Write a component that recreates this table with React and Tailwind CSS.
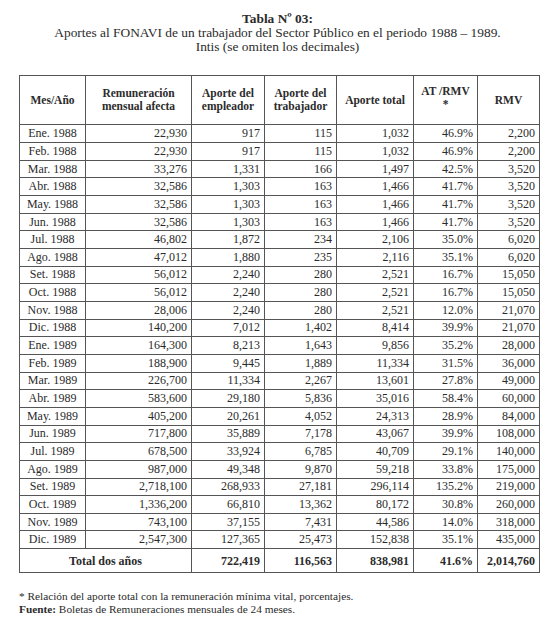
const rows = [
  ["Ene. 1988", "22,930", "917", "115", "1,032", "46.9%", "2,200"],
  ["Feb. 1988", "22,930", "917", "115", "1,032", "46.9%", "2,200"],
  ["Mar. 1988", "33,276", "1,331", "166", "1,497", "42.5%", "3,520"],
  ["Abr. 1988", "32,586", "1,303", "163", "1,466", "41.7%", "3,520"],
  ["May. 1988", "32,586", "1,303", "163", "1,466", "41.7%", "3,520"],
  ["Jun. 1988", "32,586", "1,303", "163", "1,466", "41.7%", "3,520"],
  ["Jul. 1988", "46,802", "1,872", "234", "2,106", "35.0%", "6,020"],
  ["Ago. 1988", "47,012", "1,880", "235", "2,116", "35.1%", "6,020"],
  ["Set. 1988", "56,012", "2,240", "280", "2,521", "16.7%", "15,050"],
  ["Oct. 1988", "56,012", "2,240", "280", "2,521", "16.7%", "15,050"],
  ["Nov. 1988", "28,006", "2,240", "280", "2,521", "12.0%", "21,070"],
  ["Dic. 1988", "140,200", "7,012", "1,402", "8,414", "39.9%", "21,070"],
  ["Ene. 1989", "164,300", "8,213", "1,643", "9,856", "35.2%", "28,000"],
  ["Feb. 1989", "188,900", "9,445", "1,889", "11,334", "31.5%", "36,000"],
  ["Mar. 1989", "226,700", "11,334", "2,267", "13,601", "27.8%", "49,000"],
  ["Abr. 1989", "583,600", "29,180", "5,836", "35,016", "58.4%", "60,000"],
  ["May. 1989", "405,200", "20,261", "4,052", "24,313", "28.9%", "84,000"],
  ["Jun. 1989", "717,800", "35,889", "7,178", "43,067", "39.9%", "108,000"],
  ["Jul. 1989", "678,500", "33,924", "6,785", "40,709", "29.1%", "140,000"],
  ["Ago. 1989", "987,000", "49,348", "9,870", "59,218", "33.8%", "175,000"],
  ["Set. 1989", "2,718,100", "268,933", "27,181", "296,114", "135.2%", "219,000"],
  ["Oct. 1989", "1,336,200", "66,810", "13,362", "80,172", "30.8%", "260,000"],
  ["Nov. 1989", "743,100", "37,155", "7,431", "44,586", "14.0%", "318,000"],
  ["Dic. 1989", "2,547,300", "127,365", "25,473", "152,838", "35.1%", "435,000"],
];

const cell = "border border-[#555] px-[4px] py-0";

export default function App() {
  return (
    <div className="w-[555px] h-[619px] bg-white text-[#2b2b2b] overflow-hidden font-['Liberation_Serif',serif]">
      <div className="pt-[12px] text-center text-[13.4px] leading-[13.8px]">
        <div className="font-bold">Tabla Nº 03:</div>
        <div>Aportes al FONAVI de un trabajador del Sector Público en el periodo 1988 – 1989.</div>
        <div>Intis (se omiten los decimales)</div>
      </div>
      <table className="ml-[19px] mt-[22px] border-collapse table-fixed w-[520px] text-[12px] font-['Liberation_Serif',serif]">
        <colgroup>
          <col className="w-[66px]" />
          <col className="w-[106px]" />
          <col className="w-[73px]" />
          <col className="w-[72px]" />
          <col className="w-[77px]" />
          <col className="w-[64px]" />
          <col className="w-[62px]" />
        </colgroup>
        <thead>
          <tr className="h-[49px] font-bold text-[11.5px] leading-[13px]">
            <th className={cell}>Mes/Año</th>
            <th className={cell}>Remuneración<br />mensual afecta</th>
            <th className={cell}>Aporte del<br />empleador</th>
            <th className={cell}>Aporte del<br />trabajador</th>
            <th className={cell}>Aporte total</th>
            <th className={cell + " align-top pt-[9px]"}>AT /RMV<br />*</th>
            <th className={cell}>RMV</th>
          </tr>
        </thead>
        <tbody>
          {rows.map((r) => (
            <tr key={r[0]} className="h-[17.67px] leading-[15px]">
              <td className={cell + " text-center"}>{r[0]}</td>
              {r.slice(1).map((v, i) => (
                <td key={i} className={cell + " text-right"}>{v}</td>
              ))}
            </tr>
          ))}
          <tr className="h-[24px] font-bold">
            <td colSpan={2} className={cell + " text-center"}>Total dos años</td>
            <td className={cell + " text-right"}>722,419</td>
            <td className={cell + " text-right"}>116,563</td>
            <td className={cell + " text-right"}>838,981</td>
            <td className={cell + " text-right"}>41.6%</td>
            <td className={cell + " text-right"}>2,014,760</td>
          </tr>
        </tbody>
      </table>
      <div className="ml-[19px] mt-[17px] text-[11.3px] leading-[13px]">
        <div>* Relación del aporte total con la remuneración mínima vital, porcentajes.</div>
        <div><span className="font-bold">Fuente:</span> Boletas de Remuneraciones mensuales  de 24 meses.</div>
      </div>
    </div>
  );
}
